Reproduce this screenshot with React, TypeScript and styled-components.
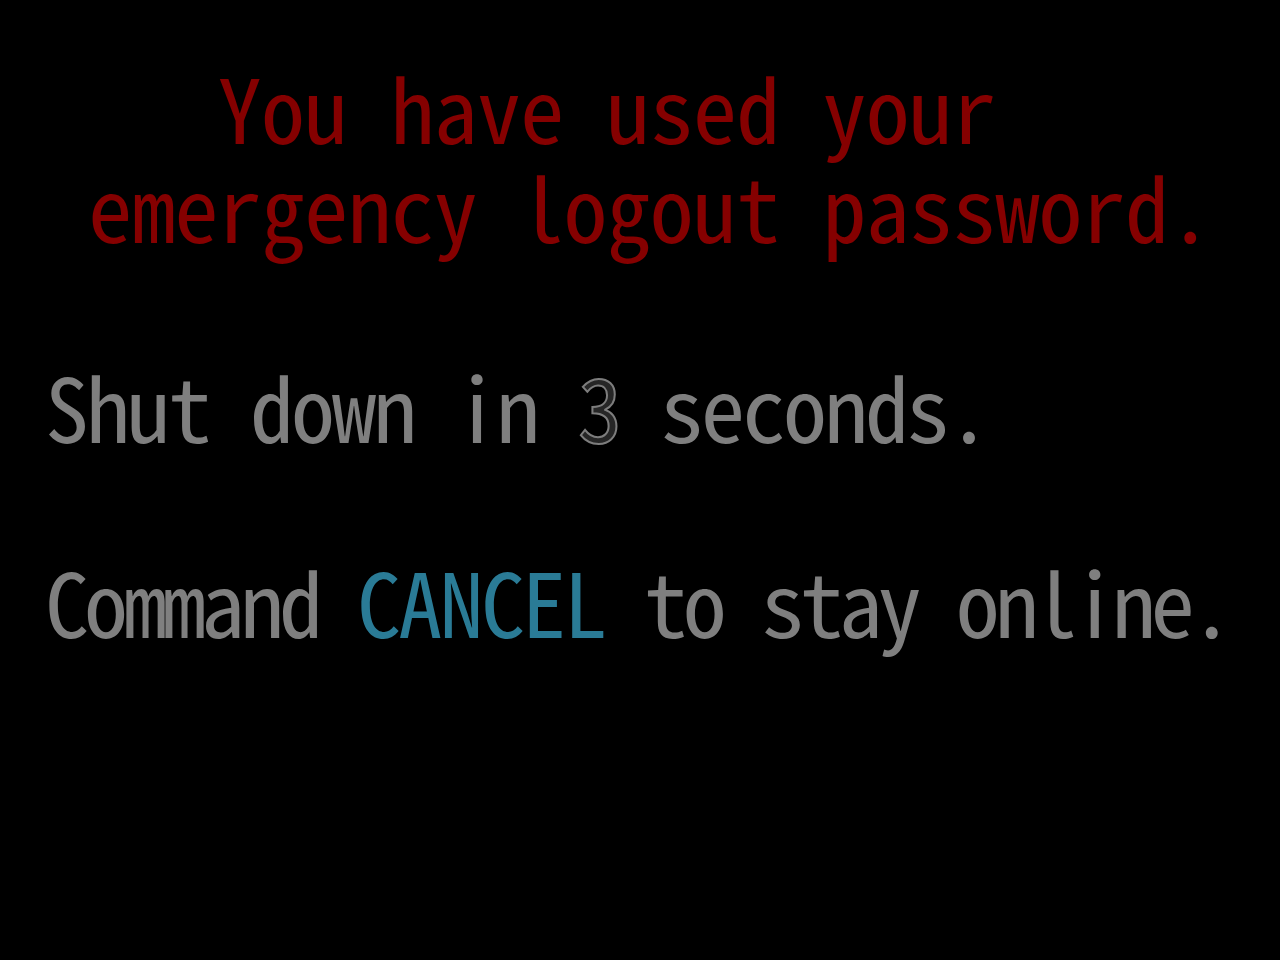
import React from 'react';
import styled, { createGlobalStyle } from 'styled-components';

const GlobalStyle = createGlobalStyle`
  html, body {
    margin: 0;
    padding: 0;
    background: #000;
  }
`;

const Screen = styled.div`
  width: 1280px;
  height: 960px;
  background: #000;
  box-sizing: border-box;
  padding: 56px 0 0 45px;
  overflow: hidden;
  font-family: "Noto Sans Mono CJK JP", "Noto Sans CJK JP", "DejaVu Sans Mono", monospace;
  font-feature-settings: "hwid";
`;

const Line = styled.div<{ $tone: 'alert' | 'plain'; $pitch: number; $gap: number }>`
  white-space: pre;
  font-size: 88px;
  line-height: 99px;
  height: 99px;
  margin-top: ${(p) => p.$gap}px;
  letter-spacing: ${(p) => p.$pitch}px;
  color: ${(p) => (p.$tone === 'alert' ? '#850000' : '#7f7f7f')};
  text-shadow: 0 0 3px rgba(0, 0, 0, 0.9);
`;

const Count = styled.span`
  color: #262626;
  -webkit-text-stroke: 2px #7d7d7d;
`;

const Keyword = styled.span`
  color: #2a7b96;
  font-weight: 500;
  letter-spacing: -2.7px;
`;

export default function App() {
  return (
    <Screen>
      <GlobalStyle />
      <Line $tone="alert" $pitch={-0.8} $gap={0}>{'    You have used your'}</Line>
      <Line $tone="alert" $pitch={-0.8} $gap={0}>{' emergency logout password.'}</Line>
      <Line $tone="plain" $pitch={-3} $gap={101}>
        Shut down in <Count>3</Count> seconds.
      </Line>
      <Line $tone="plain" $pitch={-5} $gap={96}>
        Command <Keyword>CANCEL</Keyword> to stay online.
      </Line>
    </Screen>
  );
}
